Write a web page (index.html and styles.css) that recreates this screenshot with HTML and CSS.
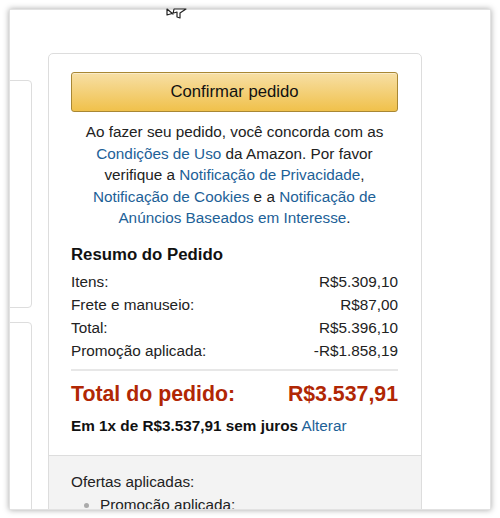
FILE: index.html
```html
<!DOCTYPE html>
<html lang="pt-BR">
<head>
    <meta charset="UTF-8">
    <meta name="viewport" content="width=device-width, initial-scale=1.0">
    <title>Confirmar pedido</title>
    <link rel="stylesheet" href="styles.css">
</head>
<body>
    <div class="window">
        <div class="left-col">
            <div class="side-card card-a"></div>
            <div class="side-card card-b"></div>
        </div>

        <div class="order-box">
            <div class="order-main">
                <button class="place-order">Confirmar pedido</button>
                <p class="legal">
                    Ao fazer seu pedido, você concorda com as
                    <a href="#">Condições de Uso</a> da Amazon. Por favor
                    verifique a <a href="#">Notificação de Privacidade</a>,
                    <a href="#">Notificação de Cookies</a> e a <a href="#">Notificação de
                    Anúncios Baseados em Interesse</a>.
                </p>

                <h3 class="summary-title">Resumo do Pedido</h3>
                <div class="summary">
                    <div class="row"><span>Itens:</span><span>R$5.309,10</span></div>
                    <div class="row"><span>Frete e manuseio:</span><span>R$87,00</span></div>
                    <div class="row"><span>Total:</span><span>R$5.396,10</span></div>
                    <div class="row"><span>Promoção aplicada:</span><span>-R$1.858,19</span></div>
                </div>

                <div class="grand-total">
                    <span>Total do pedido:</span>
                    <span>R$3.537,91</span>
                </div>
                <div class="installments">
                    <b>Em 1x de R$3.537,91 sem juros</b> <a href="#">Alterar</a>
                </div>
            </div>

            <div class="order-offers">
                <div>Ofertas aplicadas:</div>
                <ul>
                    <li>Promoção aplicada:</li>
                </ul>
            </div>
        </div>
    </div>

    <!-- ponteiro do mouse -->
    <svg class="cursor" width="24" height="20" viewBox="0 0 24 20">
        <path d="M2 15 L2 9 L8 14 L9 9 L21 9 L15 13 L15 18 L12 17 L12 12 Z" fill="#fff" stroke="#222" stroke-width="1.2" stroke-linejoin="round"/>
    </svg>
</body>
</html>
```

FILE: styles.css
```css
body {
    margin: 0;
    background: #fff;
    font-family: "Liberation Sans", Arial, sans-serif;
    color: #111;
}
.window {
    margin: 9px;
    width: 482px;
    height: 501px;
    box-sizing: border-box;
    border: 1px solid #e2e2e2;
    box-shadow: 0 0 6px rgba(0,0,0,0.35);
    overflow: hidden;
    display: flex;
    gap: 16px;
    background: #fff;
}
.left-col {
    width: 22px;
    flex-shrink: 0;
    padding-top: 70px;
    display: flex;
    flex-direction: column;
    gap: 14px;
}
.side-card {
    flex-shrink: 0;
    margin-left: -20px;
    border: 1px solid #ddd;
    border-radius: 4px;
}
.card-a {
    height: 226px;
}
.card-b {
    height: 300px;
}
.order-box {
    margin-top: 43px;
    width: 374px;
    box-sizing: border-box;
    border: 1px solid #ddd;
    border-radius: 5px;
    align-self: flex-start;
}
.order-main {
    padding: 18px 23px 18px 22px;
}
.place-order {
    display: block;
    width: 100%;
    height: 40px;
    border: 1px solid #a88734;
    border-radius: 3px;
    background: linear-gradient(to bottom, #f7dfa5, #f0c14b);
    box-shadow: inset 0 1px 0 rgba(255,255,255,0.4);
    font-family: "Liberation Sans", Arial, sans-serif;
    font-size: 16.7px;
    color: #111;
    padding: 0;
}
.legal {
    margin: 9px 0 0 0;
    text-align: center;
    font-size: 15.3px;
    line-height: 21.6px;
    color: #222;
}
a {
    color: #1d6197;
    text-decoration: none;
}
.summary-title {
    margin: 14px 0 3px 0;
    font-size: 16.8px;
    line-height: 24px;
    font-weight: bold;
}
.summary {
    border-bottom: 2px solid #e7e7e7;
    padding-bottom: 7px;
}
.row {
    display: flex;
    justify-content: space-between;
    font-size: 15.3px;
    line-height: 23px;
    color: #222;
}
.grand-total {
    display: flex;
    justify-content: space-between;
    margin-top: 9px;
    font-size: 21.3px;
    line-height: 28px;
    font-weight: bold;
    color: #b12704;
}
.installments {
    margin-top: 7px;
    font-size: 15.3px;
    line-height: 22px;
}
.order-offers {
    border-top: 1px solid #ddd;
    background: #f3f3f3;
    padding: 15px 22px 20px 22px;
    font-size: 15.3px;
    line-height: 21px;
    color: #222;
}
.order-offers ul {
    margin: 2px 0 0 0;
    padding-left: 29px;
}
.order-offers li::marker {
    color: #aaa;
}
.cursor {
    position: absolute;
    left: 165px;
    top: 0;
}
```
